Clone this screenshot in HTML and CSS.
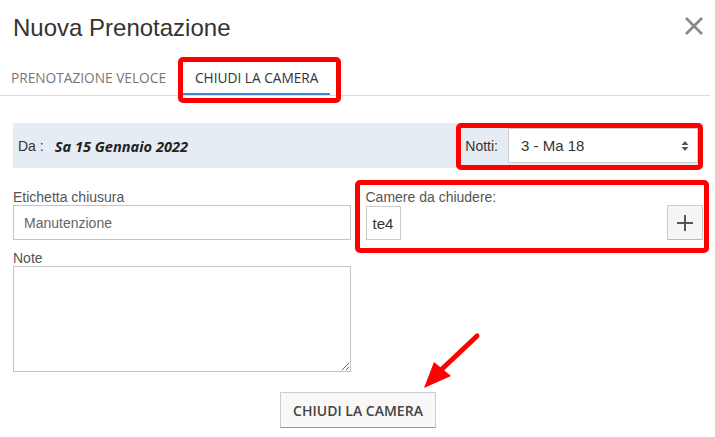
FILE: index.html
```html
<!DOCTYPE html>
<html lang="it">
<head>
  <meta charset="UTF-8" />
  <title>Nuova Prenotazione</title>
  <link rel="stylesheet" href="styles.css">
</head>
<body>
  <div class="modal">
    <div class="header">
      <h1>Nuova Prenotazione</h1>
      <svg class="close" width="20" height="20" viewBox="0 0 20 20">
        <path d="M2 2 L18 18 M18 2 L2 18" stroke="#888" stroke-width="2.6" fill="none"/>
      </svg>
    </div>

    <div class="tabs">
      <div class="tab">Prenotazione veloce</div>
      <div class="tab ativo">Chiudi la camera</div>
    </div>

    <div class="corpo">
      <div class="faixa">
        <div class="data">
          <span class="da">Da :</span>
          <span class="giorno">Sa 15 Gennaio 2022</span>
        </div>
        <div class="notti">
          <span>Notti:</span>
          <div class="select">
            <span>3 - Ma 18</span>
            <svg width="8" height="12" viewBox="0 0 8 12">
              <path d="M4 1 L7.5 5 L0.5 5 Z M4 11 L7.5 7 L0.5 7 Z" fill="#555"/>
            </svg>
          </div>
        </div>
      </div>

      <div class="campos">
        <div class="coluna">
          <label>Etichetta chiusura</label>
          <input type="text" value="Manutenzione">
          <label class="nota">Note</label>
          <textarea></textarea>
        </div>
        <div class="coluna">
          <label>Camere da chiudere:</label>
          <div class="camere">
            <div class="camera">te4</div>
            <button class="mais">
              <svg width="18" height="18" viewBox="0 0 18 18">
                <path d="M9 1 V17 M1 9 H17" stroke="#555" stroke-width="2" fill="none"/>
              </svg>
            </button>
          </div>
        </div>
      </div>

      <div class="acoes">
        <button class="chiudi">Chiudi la camera</button>
      </div>
    </div>

    <!-- marcacoes vermelhas -->
    <div class="marca marca-tab"></div>
    <div class="marca marca-notti"></div>
    <div class="marca marca-camere"></div>
    <svg class="seta" width="715" height="437" viewBox="0 0 715 437">
      <path d="M477 336 L441 370" stroke="#f00" stroke-width="5" stroke-linecap="round"/>
      <path d="M424 388 L434 362 L451 376 Z" fill="#f00"/>
    </svg>
  </div>
</body>
</html>
```

FILE: styles.css
```css
* {
  margin: 0;
  padding: 0;
  box-sizing: border-box;
}

body {
  background-color: #ffffff;
  color: #333333;
  font-family: 'Liberation Sans', Arial, sans-serif;
  font-size: 14px;
}

.modal {
  position: relative;
  width: 715px;
  height: 437px;
  overflow: hidden;
}

.header {
  display: flex;
  justify-content: space-between;
  align-items: flex-start;
  padding: 16px 11px 0 13px;
  height: 58px;
}

.header h1 {
  font-size: 24px;
  font-weight: normal;
  line-height: 24px;
  color: #333333;
}

.tabs {
  display: flex;
  border-bottom: 1px solid #dddddd;
  margin-right: 5px;
  height: 38px;
}

.tab {
  font-family: 'Open Sans', sans-serif;
  font-size: 13.7px;
  line-height: 20px;
  text-transform: uppercase;
  color: #777777;
  padding: 10px 12px 5px 11px;
  height: 37px;
}

.tab.ativo {
  color: #333333;
  margin-left: 5px;
  padding: 10px 12px 5px 12px;
  border-bottom: 2px solid #3a86d8;
}

.corpo {
  padding: 27px 12px 0 13px;
}

.faixa {
  display: flex;
  justify-content: space-between;
  align-items: center;
  background-color: #e6ecf3;
  height: 45px;
  padding: 5px;
}

.data {
  display: flex;
  align-items: center;
}

.da {
  color: #333333;
}

.giorno {
  font-family: 'Open Sans', sans-serif;
  font-style: italic;
  font-weight: bold;
  font-size: 14.6px;
  margin-left: 11px;
  color: #222222;
}

.notti {
  display: flex;
  align-items: center;
  gap: 10px;
}

.select {
  display: flex;
  justify-content: space-between;
  align-items: center;
  width: 190px;
  height: 35px;
  background-color: #ffffff;
  border: 1px solid #cccccc;
  padding: 0 8px 0 12px;
  font-size: 15px;
}

.campos {
  display: grid;
  grid-template-columns: 1fr 1fr;
  gap: 15px;
  margin-top: 21px;
}

.coluna {
  display: flex;
  flex-direction: column;
}

.coluna label {
  line-height: 16px;
  color: #555555;
}

.coluna label.nota {
  margin-top: 10px;
}

.coluna input {
  height: 35px;
  border: 1px solid #c4c4c4;
  padding: 0 10px;
  font-family: 'Liberation Sans', Arial, sans-serif;
  font-size: 14px;
  color: #666666;
}

.coluna textarea {
  height: 106px;
  border: 1px solid #c4c4c4;
  font-family: 'Liberation Sans', Arial, sans-serif;
}

.camere {
  display: flex;
  justify-content: space-between;
  align-items: flex-start;
}

.camera {
  margin-top: 1px;
  width: 35px;
  height: 34px;
  border: 1px solid #cccccc;
  display: flex;
  align-items: center;
  justify-content: center;
  color: #333333;
  font-size: 15px;
}

.mais {
  width: 36px;
  height: 35px;
  background-color: #f5f5f5;
  border: 1px solid #cccccc;
  border-bottom-color: #bbbbbb;
  display: flex;
  align-items: center;
  justify-content: center;
}

.acoes {
  display: flex;
  justify-content: center;
  margin-top: 20px;
}

.chiudi {
  font-family: 'Open Sans', sans-serif;
  font-size: 14px;
  font-weight: 600;
  text-transform: uppercase;
  color: #444444;
  background-color: #f8f8f8;
  border: 1px solid #cccccc;
  border-bottom-color: #999999;
  height: 36px;
  padding: 0 12px;
}

.marca {
  position: absolute;
  border: 5px solid #ff0000;
  border-radius: 5px;
}

.marca-tab {
  left: 178px;
  top: 57px;
  width: 163px;
  height: 46px;
}

.marca-notti {
  left: 456px;
  top: 123px;
  width: 247px;
  height: 47px;
}

.marca-camere {
  left: 355px;
  top: 180px;
  width: 354px;
  height: 73px;
}

.seta {
  position: absolute;
  left: 0;
  top: 0;
}
```
